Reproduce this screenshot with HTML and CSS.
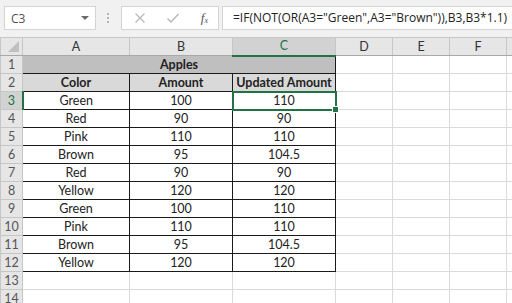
FILE: index.html
```html
<!DOCTYPE html>
<html lang="en">
  <head>
    <meta charset="UTF-8" />
    <meta name="viewport" content="width=device-width, initial-scale=1.0" />
    <title>Apples - Excel</title>
    <link rel="stylesheet" href="styles.css">
  </head>
  <body>
    <div class="formula-bar">
      <div class="name-box">
        <span>C3</span>
        <span class="caret"></span>
      </div>
      <div class="grip">
        <span></span><span></span><span></span>
      </div>
      <div class="fx-buttons">
        <svg width="12" height="12" viewBox="0 0 12 12"><path d="M1.5 1.5l9 9M10.5 1.5l-9 9" stroke="#b8b8b8" stroke-width="1.3" fill="none"/></svg>
        <svg width="14" height="12" viewBox="0 0 14 12"><path d="M1.5 6.5l3.5 3.5 7.5-8" stroke="#b8b8b8" stroke-width="1.5" fill="none"/></svg>
        <span class="fx">f<sub>x</sub></span>
      </div>
      <div class="formula">=IF(NOT(OR(A3="Green",A3="Brown")),B3,B3*1.1)</div>
    </div>

    <table class="sheet">
      <colgroup>
        <col class="c-row">
        <col class="c-a">
        <col class="c-b">
        <col class="c-c">
        <col class="c-s">
        <col class="c-s">
        <col class="c-s">
        <col class="c-s">
      </colgroup>
      <tr class="col-heads">
        <th class="corner"><span class="tri"></span></th>
        <th>A</th>
        <th>B</th>
        <th class="active">C</th>
        <th>D</th>
        <th>E</th>
        <th>F</th>
        <th></th>
      </tr>
      <tr>
        <th class="row-head">1</th>
        <td class="box title" colspan="3">Apples</td>
        <td></td><td></td><td></td><td></td>
      </tr>
      <tr>
        <th class="row-head">2</th>
        <td class="box head">Color</td>
        <td class="box head">Amount</td>
        <td class="box head">Updated Amount</td>
        <td></td><td></td><td></td><td></td>
      </tr>
      <tr>
        <th class="row-head active">3</th>
        <td class="box">Green</td>
        <td class="box">100</td>
        <td class="box selected">110<span class="handle"></span></td>
        <td></td><td></td><td></td><td></td>
      </tr>
      <tr>
        <th class="row-head">4</th>
        <td class="box">Red</td><td class="box">90</td><td class="box">90</td>
        <td></td><td></td><td></td><td></td>
      </tr>
      <tr>
        <th class="row-head">5</th>
        <td class="box">Pink</td><td class="box">110</td><td class="box">110</td>
        <td></td><td></td><td></td><td></td>
      </tr>
      <tr>
        <th class="row-head">6</th>
        <td class="box">Brown</td><td class="box">95</td><td class="box">104.5</td>
        <td></td><td></td><td></td><td></td>
      </tr>
      <tr>
        <th class="row-head">7</th>
        <td class="box">Red</td><td class="box">90</td><td class="box">90</td>
        <td></td><td></td><td></td><td></td>
      </tr>
      <tr>
        <th class="row-head">8</th>
        <td class="box">Yellow</td><td class="box">120</td><td class="box">120</td>
        <td></td><td></td><td></td><td></td>
      </tr>
      <tr>
        <th class="row-head">9</th>
        <td class="box">Green</td><td class="box">100</td><td class="box">110</td>
        <td></td><td></td><td></td><td></td>
      </tr>
      <tr>
        <th class="row-head">10</th>
        <td class="box">Pink</td><td class="box">110</td><td class="box">110</td>
        <td></td><td></td><td></td><td></td>
      </tr>
      <tr>
        <th class="row-head">11</th>
        <td class="box">Brown</td><td class="box">95</td><td class="box">104.5</td>
        <td></td><td></td><td></td><td></td>
      </tr>
      <tr>
        <th class="row-head">12</th>
        <td class="box">Yellow</td><td class="box">120</td><td class="box">120</td>
        <td></td><td></td><td></td><td></td>
      </tr>
      <tr>
        <th class="row-head">13</th>
        <td></td><td></td><td></td><td></td><td></td><td></td><td></td>
      </tr>
      <tr>
        <th class="row-head">14</th>
        <td></td><td></td><td></td><td></td><td></td><td></td><td></td>
      </tr>
    </table>
  </body>
</html>
```

FILE: styles.css
```css
body {
  margin: 0;
  overflow: hidden;
  background: #fff;
  font-family: "Lato", "Open Sans", sans-serif;
}

.formula-bar {
  display: flex;
  align-items: center;
  height: 37px;
  padding: 0 0 1px 4px;
  box-sizing: border-box;
  background: #f1f1f1;
}

.name-box {
  display: flex;
  align-items: center;
  justify-content: space-between;
  width: 92px;
  height: 24px;
  box-sizing: border-box;
  padding: 0 6px 0 6px;
  background: #fff;
  border: 1px solid #d4d4d4;
  font-family: "Open Sans", sans-serif;
  font-size: 12px;
  color: #505050;
}

.caret {
  width: 0;
  height: 0;
  border-left: 4px solid transparent;
  border-right: 4px solid transparent;
  border-top: 4px solid #6a6a6a;
}

.grip {
  display: flex;
  flex-direction: column;
  gap: 2px;
  margin: 0 12px 0 11px;
}

.grip span {
  width: 2px;
  height: 2px;
  background: #b5b5b5;
}

.fx-buttons {
  display: flex;
  align-items: center;
  justify-content: space-between;
  width: 98px;
  height: 24px;
  box-sizing: border-box;
  padding: 0 10px 0 12px;
  background: #fff;
  border: 1px solid #d4d4d4;
}

.fx {
  font-family: "Liberation Serif", serif;
  font-style: italic;
  font-size: 13px;
  color: #555;
}

.fx sub {
  font-size: 8px;
  vertical-align: -1px;
}

.formula {
  flex: 1;
  height: 24px;
  line-height: 22px;
  margin-left: 3px;
  padding-left: 10px;
  box-sizing: border-box;
  background: #fff;
  border: 1px solid #d4d4d4;
  border-right: none;
  white-space: nowrap;
  overflow: hidden;
  font-family: "Open Sans", sans-serif;
  font-size: 12px;
  color: #222;
}

.sheet {
  table-layout: fixed;
  border-collapse: collapse;
  width: 563px;
  font-size: 12.5px;
  color: #222;
}

.c-row { width: 22px; }
.c-a { width: 107px; }
.c-b { width: 103px; }
.c-c { width: 103px; }
.c-s { width: 57px; }

.sheet tr {
  height: 18px;
}

.sheet td,
.sheet th {
  padding: 0;
  height: 18px;
  box-sizing: border-box;
  border: 1px solid #dadada;
  text-align: center;
  white-space: nowrap;
  line-height: 16px;
}

.col-heads th {
  background: #e6e6e6;
  border-color: #c6c6c6;
  border-bottom-color: #a8a8a8;
  font-weight: normal;
  color: #333;
}

.col-heads th.active {
  background: #d2d2d2;
  color: #217346;
  border-bottom: 2px solid #217346;
}

.corner {
  position: relative;
}

.tri {
  position: absolute;
  right: 3px;
  bottom: 3px;
  width: 0;
  height: 0;
  border-left: 11px solid transparent;
  border-bottom: 11px solid #c0c0c0;
}

.row-head {
  background: #e6e6e6;
  border-color: #c6c6c6 !important;
  font-weight: normal;
  color: #555;
}

.row-head.active {
  background: #d2d2d2;
  color: #217346;
  border-right: 2px solid #217346 !important;
}

.sheet td.box {
  border: 1px solid #1a1a1a;
}

.title {
  background: #bfbfbf;
  font-weight: bold;
}

.head {
  background: #d9d9d9;
  font-weight: bold;
}

.selected {
  position: relative;
  outline: 2px solid #217346;
  outline-offset: -1px;
}

.handle {
  position: absolute;
  right: -4px;
  bottom: -4px;
  width: 5px;
  height: 5px;
  background: #217346;
  border: 1px solid #fff;
}
```
